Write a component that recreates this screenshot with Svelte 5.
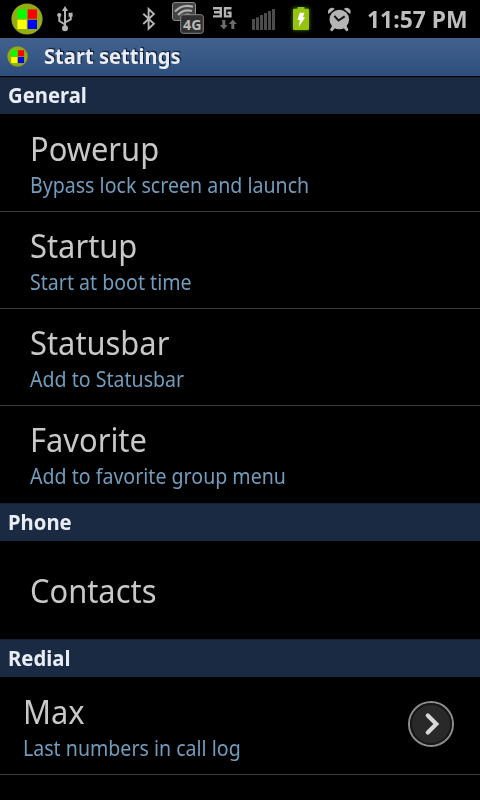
<script lang="ts">
  type Item = { title: string; summary?: string; more?: boolean };
  type Group = { name: string; items: Item[] };

  const groups: Group[] = [
    {
      name: 'General',
      items: [
        { title: 'Powerup', summary: 'Bypass lock screen and launch' },
        { title: 'Startup', summary: 'Start at boot time' },
        { title: 'Statusbar', summary: 'Add to Statusbar' },
        { title: 'Favorite', summary: 'Add to favorite group menu' },
      ],
    },
    { name: 'Phone', items: [{ title: 'Contacts' }] },
    { name: 'Redial', items: [{ title: 'Max', summary: 'Last numbers in call log', more: true }] },
  ];
</script>

{#snippet logo(size: number)}
  <svg class="logo" width={size} height={size} viewBox="0 0 32 32">
    <circle cx="16" cy="16" r="15.6" fill="#9a9f1c" />
    <circle cx="16" cy="16" r="14.6" fill="#8fae12" />
    <path fill="#0f0" d="M6.4 6.4h9.3v9.3H6.4z" />
    <path fill="#f00" d="M16.7 6.4H26v9.3h-9.3z" />
    <path fill="#ff0" d="M6.4 16.7h9.3V26H6.4z" />
    <path fill="#00f" d="M16.7 16.7H26V26h-9.3z" />
  </svg>
{/snippet}

<div class="screen">
  <div class="status">
    {@render logo(32)}
    <svg class="usb" width="18" height="26" viewBox="0 0 18 26" fill="none" stroke="#b4b4b4" stroke-width="2">
      <path d="M9 4v18M9 18.5L3.3 15V10M9 16.5l5.7-3.2V9" />
      <path d="M9 0l3 5H6zM12.6 6.8h4v4h-4z" fill="#b4b4b4" stroke="none" />
      <circle cx="3.2" cy="9" r="2.1" fill="#b4b4b4" stroke="none" />
      <circle cx="9" cy="22.3" r="3" fill="#b4b4b4" stroke="none" />
    </svg>

    <svg class="sys" width="222" height="38" viewBox="138 0 222 38">
      <path d="M143.3 13.8l10.6 10-5.3 5V9l5.3 5-10.6 10" fill="none" stroke="#b4b4b4" stroke-width="1.9" />

      <rect x="172.5" y="2.5" width="23" height="18" rx="2.5" fill="#444" stroke="#8c8c8c" />
      <g fill="none" stroke="#b0b0b0" stroke-width="2.2">
        <path d="M175 11.5Q182.500 3.500 193 6.800" />
        <path d="M178 15Q184 8.500 192 11" />
        <path d="M181 18.300Q184.500 13.500 190.500 15" />
      </g>
      <rect x="180.7" y="14.7" width="22.6" height="18.6" rx="2.5" fill="#303030" stroke="#858585" />
      <text class="g4" x="183" y="29.5" textLength="18.5" lengthAdjust="spacingAndGlyphs">4G</text>

      <g fill="none" stroke="#b4b4b4" stroke-width="2.4">
        <path d="M213 8.200h7.800v8.200H213M214 12.300h7" />
        <path d="M231.500 8.200H225v8.200h5.400v-3.700H227.500" />
      </g>
      <path fill="#6c6c6c" d="M222.300 20h3v5h2.400l-3.900 4.500-3.900-4.500h2.400zM231.300 29v-5h-2.500l4-4.500 4 4.500h-2.500v5z" />

      <path fill="#4c4c4c" d="M252 19h3v11h-3zM256 17.300h3V30h-3zM260 15h3v15h-3zM264 13h3v17h-3zM268 11h3v19h-3zM272 9h3v21h-3z" />

      <rect class="glow" x="293" y="8" width="16" height="22" rx="1" />
      <path fill="#94c40e" d="M297.500 7h7v1.800h3.500q1 0 1 1V29q0 1-1 1h-14q-1 0-1-1V9.800q0-1 1-1h3.500z" />
      <path fill="#fff" d="M299.800 12.800h4.600l-1.500 4.500h2.200l-6.300 9.700 1-7h-2.400z" />

      <g fill="#b4b4b4">
        <circle cx="339.300" cy="19.500" r="9.800" />
        <path d="M328.500 14q-1.500-3.500 1-5.300 2.800-1.800 5.200.2zM350.100 14q1.500-3.500-1-5.300-2.800-1.800-5.200.2z" />
        <path d="M332.500 25l3 2.500-3.500 4-2-1.500zM346.100 25l-3 2.500 3.500 4 2-1.500z" />
      </g>
      <path d="M334.300 15.800l4.200 4.700 6.200-4.200" fill="none" stroke="#151515" stroke-width="2" />
    </svg>
    <span class="clock">11:57 PM</span>
  </div>

  <div class="titlebar">
    {@render logo(21)}
    <h1>Start settings</h1>
  </div>

  {#each groups as group}
    <h2><span>{group.name}</span></h2>
    <ul>
      {#each group.items as item}
        <li class:single={!item.summary} class:more={item.more}>
          <div class="text">
            <div class="title">{item.title}</div>
            {#if item.summary}<div class="summary">{item.summary}</div>{/if}
          </div>
          {#if item.more}
            <svg class="arrow" width="48" height="48" viewBox="0 0 48 48">
              <circle cx="24" cy="24" r="22" fill="#292929" stroke="#8d8d8d" stroke-width="2" />
              <circle cx="24" cy="24" r="20" fill="none" stroke="#171717" stroke-width="2" />
              <path d="M20.800 15.500l8.500 8.500-8.500 8.500" fill="none" stroke="#d8d8d8" stroke-width="4.200" stroke-linecap="round" />
            </svg>
          {/if}
        </li>
      {/each}
    </ul>
  {/each}
</div>

<style>
  :global(body) { background: #000; }
  .screen {
    width: 480px; height: 800px; overflow: hidden;
    background: #000; color: #c8c8c8;
    font-family: "Noto Sans", "Open Sans", sans-serif;
  }
  .logo { flex: none; }
  .status {
    display: flex; align-items: center;
    height: 38px; padding-left: 11px; box-sizing: border-box;
  }
  .usb { margin-left: 13px; }
  .sys { margin-left: 64px; flex: none; }
  .g4 { font-size: 15px; font-weight: 700; fill: #b8b8b8; }
  .glow { fill: #4a8000; filter: blur(2px); }
  .clock {
    margin-left: 7px; white-space: nowrap;
    font-size: 24px; line-height: 38px; font-weight: 700; color: #bebebe;
    transform: scaleX(.955); transform-origin: left;
  }
  .titlebar {
    display: flex; align-items: center; gap: 16px;
    height: 39px; padding: 0 0 1px 7px; box-sizing: border-box;
    background: linear-gradient(#43618f, #2d4f7c);
    border-bottom: 1px solid #000;
  }
  h1, h2 {
    margin: 0; font-size: 21px; font-weight: 700; color: #e8edf5;
    white-space: nowrap;
  }
  h1 {
    line-height: 36px; margin-top: -2px; text-shadow: 1px -1px 1px #0a1428;
    transform: scaleX(.96); transform-origin: left;
  }
  h2 {
    height: 38px; line-height: 37px; padding-left: 8px; box-sizing: border-box;
    background: #1a2a42; border-top: 1px solid #142033;
  }
  h2:first-of-type { height: 37px; line-height: 35px; }
  h2 span { display: inline-block; transform: scaleX(.965); transform-origin: left; }
  ul { margin: 0; padding: 0; list-style: none; }
  h2:first-of-type + ul { padding-top: 1px; }
  li {
    display: flex; align-items: center; justify-content: space-between;
    height: 97px; padding: 0 25px 0 30px; box-sizing: border-box;
    border-bottom: 1px solid #3c3c3c;
  }
  li:last-child:not(.more) { border-bottom-color: #000; }
  .single { height: 98px; }
  .more { height: 98px; padding-left: 23px; }
  .arrow { margin-top: -4px; }
  .title, .summary { white-space: nowrap; transform-origin: left; }
  .title { font-size: 33px; line-height: 44px; height: 42px; transform: scaleX(.935); }
  .summary { font-size: 22px; line-height: 30px; color: #729cbc; transform: scaleX(.89); }
</style>
